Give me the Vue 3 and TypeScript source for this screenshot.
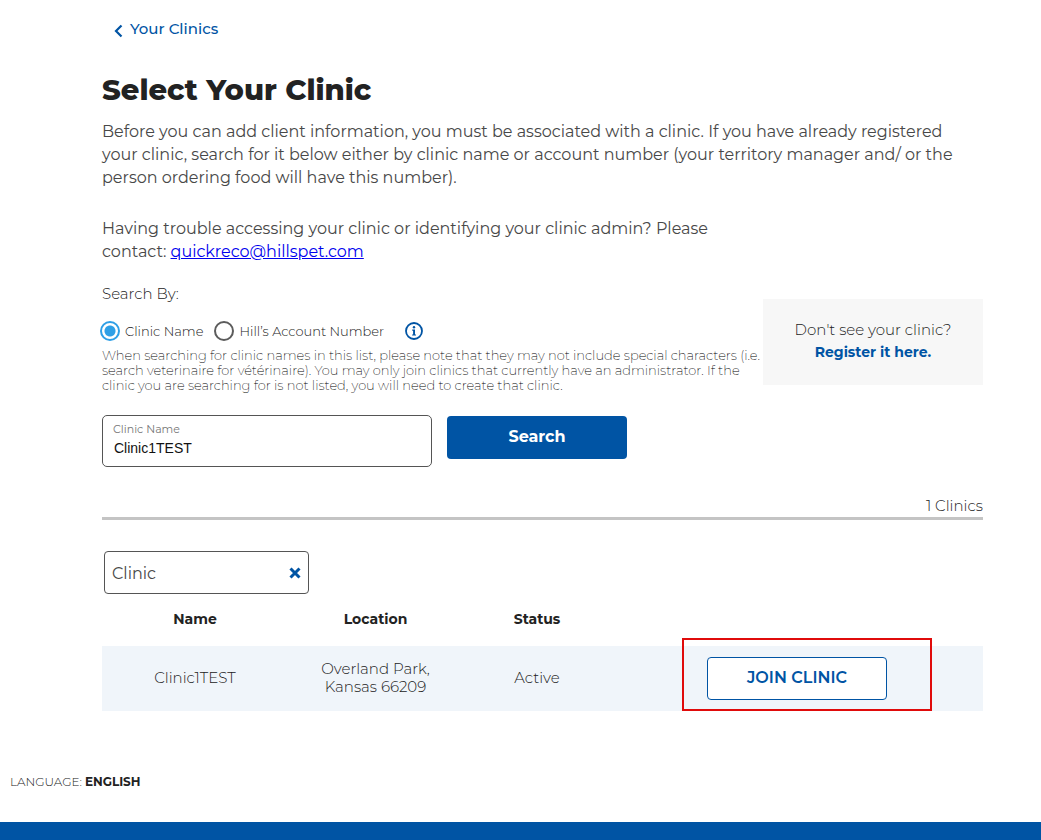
<script setup lang="ts">
import { ref } from 'vue'

interface Clinic {
  name: string
  location: string[]
  status: string
}

const searchBy = ref<'name' | 'account'>('name')
const clinicName = ref('Clinic1TEST')
const filter = ref('Clinic')
const clinics = ref<Clinic[]>([
  { name: 'Clinic1TEST', location: ['Overland Park,', 'Kansas 66209'], status: 'Active' },
])
</script>

<template>
  <div class="page">
    <main class="content">
      <a class="back" href="#">
        <svg class="chevron" viewBox="0 0 9 14" aria-hidden="true">
          <path d="M7.5 1.5 2 7l5.5 5.5" fill="none" stroke="currentColor" stroke-width="2.2" />
        </svg>
        Your Clinics
      </a>

      <h1>Select Your Clinic</h1>
      <p class="intro">
        Before you can add client information, you must be associated with a clinic. If you have already registered<br />
        your clinic, search for it below either by clinic name or account number (your territory manager and/ or the<br />
        person ordering food will have this number).
      </p>
      <p class="intro">
        Having trouble accessing your clinic or identifying your clinic admin? Please<br />
        contact: <a href="mailto:quickreco@hillspet.com">quickreco@hillspet.com</a>
      </p>

      <div class="search-area">
        <form class="search" @submit.prevent>
          <div class="search-by">Search By:</div>
          <div class="options">
            <label><input v-model="searchBy" type="radio" name="by" value="name" />Clinic Name</label>
            <label><input v-model="searchBy" type="radio" name="by" value="account" />Hill’s Account Number</label>
            <button class="info" type="button" aria-label="Search information">
              <svg viewBox="0 0 18 18" aria-hidden="true">
                <circle cx="9" cy="9" r="8" fill="none" stroke="currentColor" stroke-width="1.8" />
                <circle cx="9" cy="5.3" r="1.2" fill="currentColor" />
                <path d="M7.2 7.5H10v4.9h1v1.2H7.1v-1.2h1V8.7h-.9z" fill="currentColor" />
              </svg>
            </button>
          </div>
          <p class="note">
            When searching for clinic names in this list, please note that they may not include special characters (i.e.<br />
            search veterinaire for vétérinaire). You may only join clinics that currently have an administrator. If the<br />
            clinic you are searching for is not listed, you will need to create that clinic.
          </p>
          <div class="fields">
            <div class="field">
              <label for="clinic-name">Clinic Name</label>
              <input id="clinic-name" v-model="clinicName" type="text" />
            </div>
            <button class="primary" type="submit">Search</button>
          </div>
        </form>
        <aside class="register">
          <span>Don't see your clinic?</span>
          <a href="#">Register it here.</a>
        </aside>
      </div>

      <div class="count">{{ clinics.length }} Clinics</div>

      <div class="filter">
        <input v-model="filter" type="text" aria-label="Filter clinics" />
        <button type="button" aria-label="Clear filter" @click="filter = ''">
          <svg viewBox="0 0 12 12" aria-hidden="true">
            <path d="m1.5 1.5 9 9m0-9-9 9" stroke="currentColor" stroke-width="3" />
          </svg>
        </button>
      </div>

      <table>
        <colgroup>
          <col class="c-name" />
          <col class="c-location" />
          <col class="c-status" />
          <col />
        </colgroup>
        <thead>
          <tr>
            <th>Name</th>
            <th>Location</th>
            <th>Status</th>
            <td></td>
          </tr>
        </thead>
        <tbody>
          <tr v-for="clinic in clinics" :key="clinic.name">
            <td>{{ clinic.name }}</td>
            <td><div v-for="line in clinic.location" :key="line">{{ line }}</div></td>
            <td>{{ clinic.status }}</td>
            <td>
              <div class="action">
                <button class="join" type="button">JOIN CLINIC</button>
                <span class="highlight"></span>
              </div>
            </td>
          </tr>
        </tbody>
      </table>
    </main>
    <div class="language">LANGUAGE: <strong>ENGLISH</strong></div>
    <footer></footer>
  </div>
</template>

<style>
body {
  margin: 0;
  background: #fff;
}
</style>

<style scoped>
.page {
  min-height: 100vh;
  display: flex;
  flex-direction: column;
  font-family: Montserrat, Inter, "Open Sans", sans-serif;
  font-weight: 300;
  color: #222;
}
* {
  box-sizing: border-box;
}
button,
input {
  font-family: inherit;
  margin: 0;
}
button {
  padding: 0;
  cursor: pointer;
}
.content {
  padding: 18px 58px 0 102px;
}
.back {
  display: flex;
  align-items: center;
  gap: 7px;
  padding-left: 12px;
  font-size: 15px;
  line-height: 22px;
  font-weight: 500;
  color: #0054a4;
  text-decoration: none;
}
.chevron {
  width: 9px;
  height: 14px;
  margin-top: 4px;
}
h1 {
  margin: 30px 0 10px;
  font-size: 29px;
  line-height: 40px;
  font-weight: 800;
}
.intro {
  margin: 0 0 28px;
  font-size: 16px;
  font-weight: 400;
  line-height: 23px;
  color: #484848;
  white-space: nowrap;
}
.intro a {
  color: #0000ee;
}
.search-area {
  display: flex;
  justify-content: space-between;
  align-items: flex-start;
  margin-top: -8px;
}
.search {
  min-width: 0;
}
.search-by {
  font-size: 15px;
  line-height: 22px;
}
.options {
  display: flex;
  align-items: center;
  height: 22px;
  margin-top: 15px;
  margin-left: -2px;
  font-size: 13px;
}
.options label {
  display: flex;
  align-items: center;
  gap: 5px;
  margin-right: 11px;
}
.options input {
  appearance: none;
  width: 20px;
  height: 20px;
  border: 2px solid #5c5c5c;
  border-radius: 50%;
}
.options input:checked {
  border-color: #2e9fe6;
  background: radial-gradient(circle, #2e9fe6 5px, #fff 6px);
}
.info {
  width: 18px;
  height: 18px;
  margin-left: 10px;
  border: 0;
  background: none;
  color: #0054a4;
}
.info svg {
  display: block;
}
.note {
  margin: 6px 0 0;
  font-size: 13px;
  font-weight: 200;
  line-height: 15px;
  color: #000;
  white-space: nowrap;
}
.fields {
  display: flex;
  gap: 15px;
  align-items: flex-start;
  margin-top: 22px;
}
.field {
  width: 330px;
  height: 52px;
  padding: 6px 10px;
  border: 1px solid #555;
  border-radius: 5px;
}
.field label {
  display: block;
  font-size: 11px;
  font-weight: 400;
  line-height: 14px;
  color: #777;
}
.field input {
  width: 100%;
  height: 23px;
  padding: 0 1px;
  border: 0;
  outline: 0;
  font-family: "Liberation Sans", Arial, sans-serif;
  font-size: 14px;
  color: #111;
}
.primary {
  width: 180px;
  height: 43px;
  margin-top: 1px;
  padding-bottom: 2px;
  border: 0;
  border-radius: 4px;
  background: #0054a4;
  color: #fff;
  font-size: 16px;
  font-weight: 700;
}
.register {
  display: flex;
  flex-direction: column;
  justify-content: center;
  flex-shrink: 0;
  width: 220px;
  height: 86px;
  margin-top: 16px;
  padding-bottom: 2px;
  background: #f7f7f7;
  text-align: center;
  font-size: 15px;
  line-height: 22px;
}
.register a {
  color: #0054a4;
  font-size: 14px;
  font-weight: 700;
  text-decoration: none;
}
.count {
  margin-top: 28px;
  border-bottom: 3px solid #c4c4c4;
  text-align: right;
  font-size: 15px;
  line-height: 22px;
}
.filter {
  display: flex;
  align-items: center;
  width: 205px;
  height: 43px;
  margin: 31px 0 0 2px;
  padding: 1px 7px 0;
  border: 1px solid #555;
  border-radius: 4px;
}
.filter input {
  flex: 1;
  min-width: 0;
  padding: 0;
  border: 0;
  outline: 0;
  font-size: 16px;
  font-weight: 400;
  color: #484848;
}
.filter button {
  width: 12px;
  height: 12px;
  border: 0;
  background: none;
  color: #0054a4;
}
.filter svg {
  display: block;
}
table {
  width: 100%;
  table-layout: fixed;
  border-collapse: collapse;
  text-align: center;
  font-size: 15px;
  line-height: 18px;
}
.c-name {
  width: 186px;
}
.c-location {
  width: 175px;
}
.c-status {
  width: 148px;
}
th,
td {
  padding: 0;
}
td {
  padding-bottom: 1px;
}
th {
  height: 52px;
  padding-bottom: 2px;
  font-size: 14px;
  font-weight: 700;
}
tbody tr {
  height: 65px;
  background: #f0f5fa;
}
.action {
  position: relative;
  width: 180px;
  margin: 0 auto;
}
.join {
  display: block;
  width: 100%;
  height: 43px;
  padding-bottom: 2px;
  border: 1px solid #0054a4;
  border-radius: 4px;
  background: #fff;
  color: #0054a4;
  font-size: 16px;
  font-weight: 600;
}
.highlight {
  position: absolute;
  inset: -19px -45px -11px -25px;
  border: 2px solid #e00b0b;
  pointer-events: none;
}
.language {
  margin-top: 62px;
  padding-left: 10px;
  font-size: 12px;
  line-height: 18px;
}
.language strong {
  font-weight: 700;
}
footer {
  height: 18px;
  margin-top: auto;
  background: #0054a4;
}
</style>
